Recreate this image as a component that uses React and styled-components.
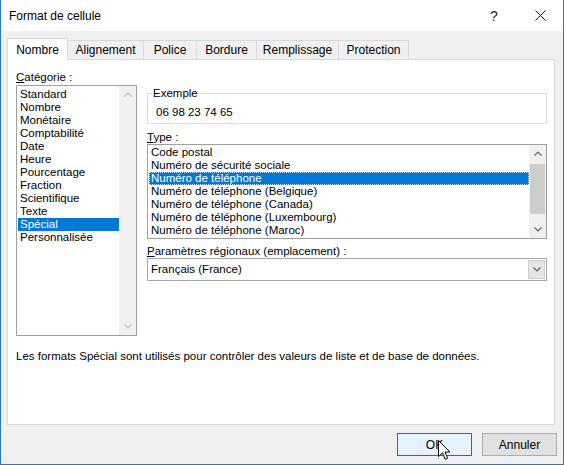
import React from 'react';
import styled, { createGlobalStyle } from 'styled-components';

const FONT = '"Liberation Sans", Arial, sans-serif';
const TEXT_SIZE = '11.5px';
const ACCENT = '#0078d7';
const WINDOW_BLUE = '#2b79c2';

const CATEGORIES = [
  'Standard',
  'Nombre',
  'Monétaire',
  'Comptabilité',
  'Date',
  'Heure',
  'Pourcentage',
  'Fraction',
  'Scientifique',
  'Texte',
  'Spécial',
  'Personnalisée',
];

const TYPES = [
  'Code postal',
  'Numéro de sécurité sociale',
  'Numéro de téléphone',
  'Numéro de téléphone (Belgique)',
  'Numéro de téléphone (Canada)',
  'Numéro de téléphone (Luxembourg)',
  'Numéro de téléphone (Maroc)',
];

const TABS = [
  { label: 'Nombre', width: 61 },
  { label: 'Alignement', width: 77 },
  { label: 'Police', width: 54 },
  { label: 'Bordure', width: 61 },
  { label: 'Remplissage', width: 83 },
  { label: 'Protection', width: 71 },
];

const GlobalStyle = createGlobalStyle`
  html, body {
    margin: 0;
    padding: 0;
    background: #fff;
  }
  body {
    font-family: ${FONT};
    font-size: ${TEXT_SIZE};
    color: #000;
  }
  * {
    box-sizing: border-box;
  }
`;

function Chevron({ direction = 'down', color = '#606060' }) {
  const points = direction === 'up' ? '0.5,4.5 4,1 7.5,4.5' : '0.5,0.5 4,4 7.5,0.5';
  return (
    <svg width="8" height="5" viewBox="0 0 8 5">
      <polyline points={points} fill="none" stroke={color} strokeWidth="1.1" />
    </svg>
  );
}

function ScrollBar({ disabled, thumb }) {
  const color = disabled ? '#c2c2c2' : '#606060';
  return (
    <ScrollTrack>
      <ScrollArrow>
        <Chevron direction="up" color={color} />
      </ScrollArrow>
      <ScrollMiddle>{thumb && <ScrollThumb $top={thumb.top} $height={thumb.height} />}</ScrollMiddle>
      <ScrollArrow>
        <Chevron direction="down" color={color} />
      </ScrollArrow>
    </ScrollTrack>
  );
}

export default function App() {
  return (
    <>
      <GlobalStyle />
      <Window>
        <TitleBar>
          <Title>Format de cellule</Title>
          <TitleButton>?</TitleButton>
          <TitleButton>
            <svg width="11" height="11" viewBox="0 0 11 11">
              <path d="M0.5 0.5 L10.5 10.5 M10.5 0.5 L0.5 10.5" stroke="#111" strokeWidth="1" />
            </svg>
          </TitleButton>
        </TitleBar>

        <Body>
          <TabRow>
            {TABS.map((tab, i) => (
              <Tab key={tab.label} $width={tab.width} $active={i === 0}>
                {tab.label}
              </Tab>
            ))}
          </TabRow>

          <Panel>
            <Columns>
              <Column>
                <Label>
                  <AccessKey>C</AccessKey>atégorie :
                </Label>
                <ListBox $height={251} $gap={1}>
                  <ListItems $pad={2}>
                    {CATEGORIES.map((c) => (
                      <ListItem key={c} $selected={c === 'Spécial'}>
                        {c}
                      </ListItem>
                    ))}
                  </ListItems>
                  <ScrollBar disabled />
                </ListBox>
              </Column>

              <RightColumn>
                <GroupBox>
                  <GroupLegend>Exemple</GroupLegend>
                  <SampleValue>06 98 23 74 65</SampleValue>
                </GroupBox>

                <Label $top={6}>
                  <AccessKey>T</AccessKey>ype :
                </Label>
                <ListBox $height={95}>
                  <ListItems $pad={1}>
                    {TYPES.map((t) => (
                      <ListItem key={t} $selected={t === 'Numéro de téléphone'} $focused={t === 'Numéro de téléphone'}>
                        {t}
                      </ListItem>
                    ))}
                  </ListItems>
                  <ScrollBar thumb={{ top: 2, height: 50 }} />
                </ListBox>

                <Label $top={5}>
                  <AccessKey>P</AccessKey>aramètres régionaux (emplacement) :
                </Label>
                <ComboBox>
                  <ComboText>Français (France)</ComboText>
                  <ComboButton>
                    <Chevron direction="down" />
                  </ComboButton>
                </ComboBox>
              </RightColumn>
            </Columns>

            <Description>
              Les formats Spécial sont utilisés pour contrôler des valeurs de liste et de base de données.
            </Description>
          </Panel>

          <Footer>
            <DialogButton $primary>OK</DialogButton>
            <DialogButton>Annuler</DialogButton>
          </Footer>
        </Body>

        <Cursor width="13" height="21" viewBox="0 0 13 21">
          <path
            d="M0.5 0.5 L0.5 16.5 L4.5 12.8 L7.2 19.3 L9.6 18.3 L7 12 L12 12 Z"
            fill="#fff"
            stroke="#000"
            strokeWidth="1"
            strokeLinejoin="miter"
          />
        </Cursor>
      </Window>
    </>
  );
}

const Window = styled.div`
  position: relative;
  width: 564px;
  height: 465px;
  display: flex;
  flex-direction: column;
  background: #f0f0f0;
  border: 1px solid ${WINDOW_BLUE};
  border-top: none;
  overflow: hidden;
`;

const TitleBar = styled.div`
  height: 31px;
  flex-shrink: 0;
  display: flex;
  align-items: center;
  background: #fff;
  padding-left: 8px;
`;

const Title = styled.div`
  flex: 1;
  font-size: 12px;
  color: #000;
`;

const TitleButton = styled.div`
  width: 46px;
  height: 31px;
  display: flex;
  align-items: center;
  justify-content: center;
  font-size: 14px;
  color: #222;
`;

const Body = styled.div`
  flex: 1;
  display: flex;
  flex-direction: column;
  padding: 7px 6px 8px 6px;
`;

const TabRow = styled.div`
  height: 22px;
  display: flex;
  align-items: flex-end;
`;

const Tab = styled.div`
  position: relative;
  z-index: ${(p) => (p.$active ? 2 : 1)};
  width: ${(p) => p.$width}px;
  height: ${(p) => (p.$active ? 22 : 19)}px;
  margin-bottom: ${(p) => (p.$active ? 0 : 1)}px;
  margin-left: -1px;
  padding-top: ${(p) => (p.$active ? 4 : 2)}px;
  border: 1px solid #d9d9d9;
  border-bottom: none;
  background: ${(p) => (p.$active ? '#fff' : '#f0f0f0')};
  text-align: center;
  line-height: 14px;
  font-size: 12px;

  &:first-child {
    margin-left: 0;
  }
`;

const Panel = styled.div`
  flex: 1;
  margin: -1px 2px 0 0;
  background: #fff;
  border: 1px solid #d9d9d9;
  padding: 10px 0 0 8px;
  display: flex;
  flex-direction: column;
`;

const Columns = styled.div`
  display: grid;
  grid-template-columns: 121px 400px;
  column-gap: 10px;
`;

const Column = styled.div`
  display: flex;
  flex-direction: column;
`;

const RightColumn = styled(Column)`
  padding-top: 16px;
`;

const Label = styled.div`
  margin-top: ${(p) => p.$top || 0}px;
  line-height: 14px;
`;

const AccessKey = styled.span`
  text-decoration: underline;
`;

const ListBox = styled.div`
  height: ${(p) => p.$height}px;
  margin-top: ${(p) => p.$gap || 0}px;
  display: flex;
  border: 1px solid #a0a0a0;
  background: #fff;
`;

const ListItems = styled.div`
  flex: 1;
  min-width: 0;
  padding-top: ${(p) => p.$pad}px;
  display: flex;
  flex-direction: column;
`;

const ListItem = styled.div`
  height: 13px;
  line-height: 13px;
  margin-left: 1px;
  padding-left: 2px;
  white-space: nowrap;
  background: ${(p) => (p.$selected ? ACCENT : 'transparent')};
  color: ${(p) => (p.$selected ? '#fff' : '#000')};
  outline: ${(p) => (p.$focused ? '1px dotted rgba(255, 255, 255, 0.75)' : 'none')};
  outline-offset: -1px;
`;

const ScrollTrack = styled.div`
  width: 17px;
  flex-shrink: 0;
  display: flex;
  flex-direction: column;
  background: #f0f0f0;
`;

const ScrollArrow = styled.div`
  height: 17px;
  display: flex;
  align-items: center;
  justify-content: center;
`;

const ScrollMiddle = styled.div`
  flex: 1;
  padding: 0 1px;
`;

const ScrollThumb = styled.div`
  margin-top: ${(p) => p.$top}px;
  height: ${(p) => p.$height}px;
  background: #cdcdcd;
`;

const GroupBox = styled.fieldset`
  margin: 0;
  min-width: 0;
  padding: 5px 8px 4px;
  border: 1px solid #dcdcdc;
`;

const GroupLegend = styled.legend`
  margin-left: -4px;
  padding: 0 1px;
  line-height: 14px;
`;

const SampleValue = styled.div`
  line-height: 14px;
`;

const ComboBox = styled.div`
  height: 23px;
  display: flex;
  border: 1px solid #a8a8a8;
  background: #fff;
`;

const ComboText = styled.div`
  flex: 1;
  padding-left: 3px;
  line-height: 21px;
`;

const ComboButton = styled.div`
  width: 17px;
  margin: 1px;
  display: flex;
  align-items: center;
  justify-content: center;
  background: #e5e5e5;
  border: 1px solid #cfcfcf;
`;

const Description = styled.div`
  margin-top: 13px;
  line-height: 14px;
`;

const Footer = styled.div`
  display: flex;
  justify-content: flex-end;
  gap: 10px;
  margin-top: 8px;
`;

const DialogButton = styled.button`
  width: 75px;
  height: 23px;
  padding: 0;
  font-family: ${FONT};
  font-size: 12px;
  color: #000;
  background: ${(p) => (p.$primary ? '#e5f1fb' : '#e1e1e1')};
  border: 1px solid ${(p) => (p.$primary ? ACCENT : '#adadad')};
`;

const Cursor = styled.svg`
  position: absolute;
  left: 437px;
  top: 440px;
`;
